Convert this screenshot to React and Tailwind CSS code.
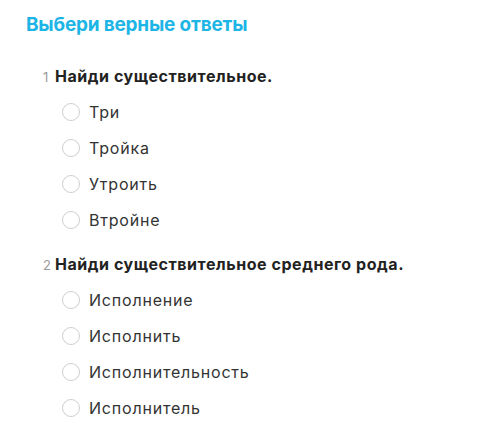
import React from "react";

const questions = [
  { n: 1, text: "Найди существительное.", options: ["Три", "Тройка", "Утроить", "Втройне"] },
  { n: 2, text: "Найди существительное среднего рода.", options: ["Исполнение", "Исполнить", "Исполнительность", "Исполнитель"] },
];

export default function App() {
  return (
    <div className="w-[484px] h-[437px] bg-white pl-[26px] pt-[13px]" style={{ fontFamily: "Inter, 'Noto Sans', sans-serif" }}>
      <h1 className="text-[19px] leading-[24px] font-bold text-[#1cb5e5] tracking-[-0.2px]">Выбери верные ответы</h1>
      <div className="mt-[27px] pl-[17px] flex flex-col gap-[14px]">
        {questions.map((q) => (
          <div key={q.n}>
            <div className="flex items-baseline h-[24px]">
              <span className="text-[13px] text-[#9a9a9a] w-[12px]">{q.n}</span>
              <span className="text-[16px] font-bold text-[#222] tracking-[0.55px]">{q.text}</span>
            </div>
            <div className="mt-[6px] pl-[19px] flex flex-col">
              {q.options.map((o) => (
                <div key={o} className="flex items-center h-[36px]">
                  <span className="w-[18px] h-[18px] rounded-full border border-[#cfcfcf] bg-white mr-[9px]" />
                  <span className="text-[16px] text-[#333] tracking-[0.8px]">{o}</span>
                </div>
              ))}
            </div>
          </div>
        ))}
      </div>
    </div>
  );
}
